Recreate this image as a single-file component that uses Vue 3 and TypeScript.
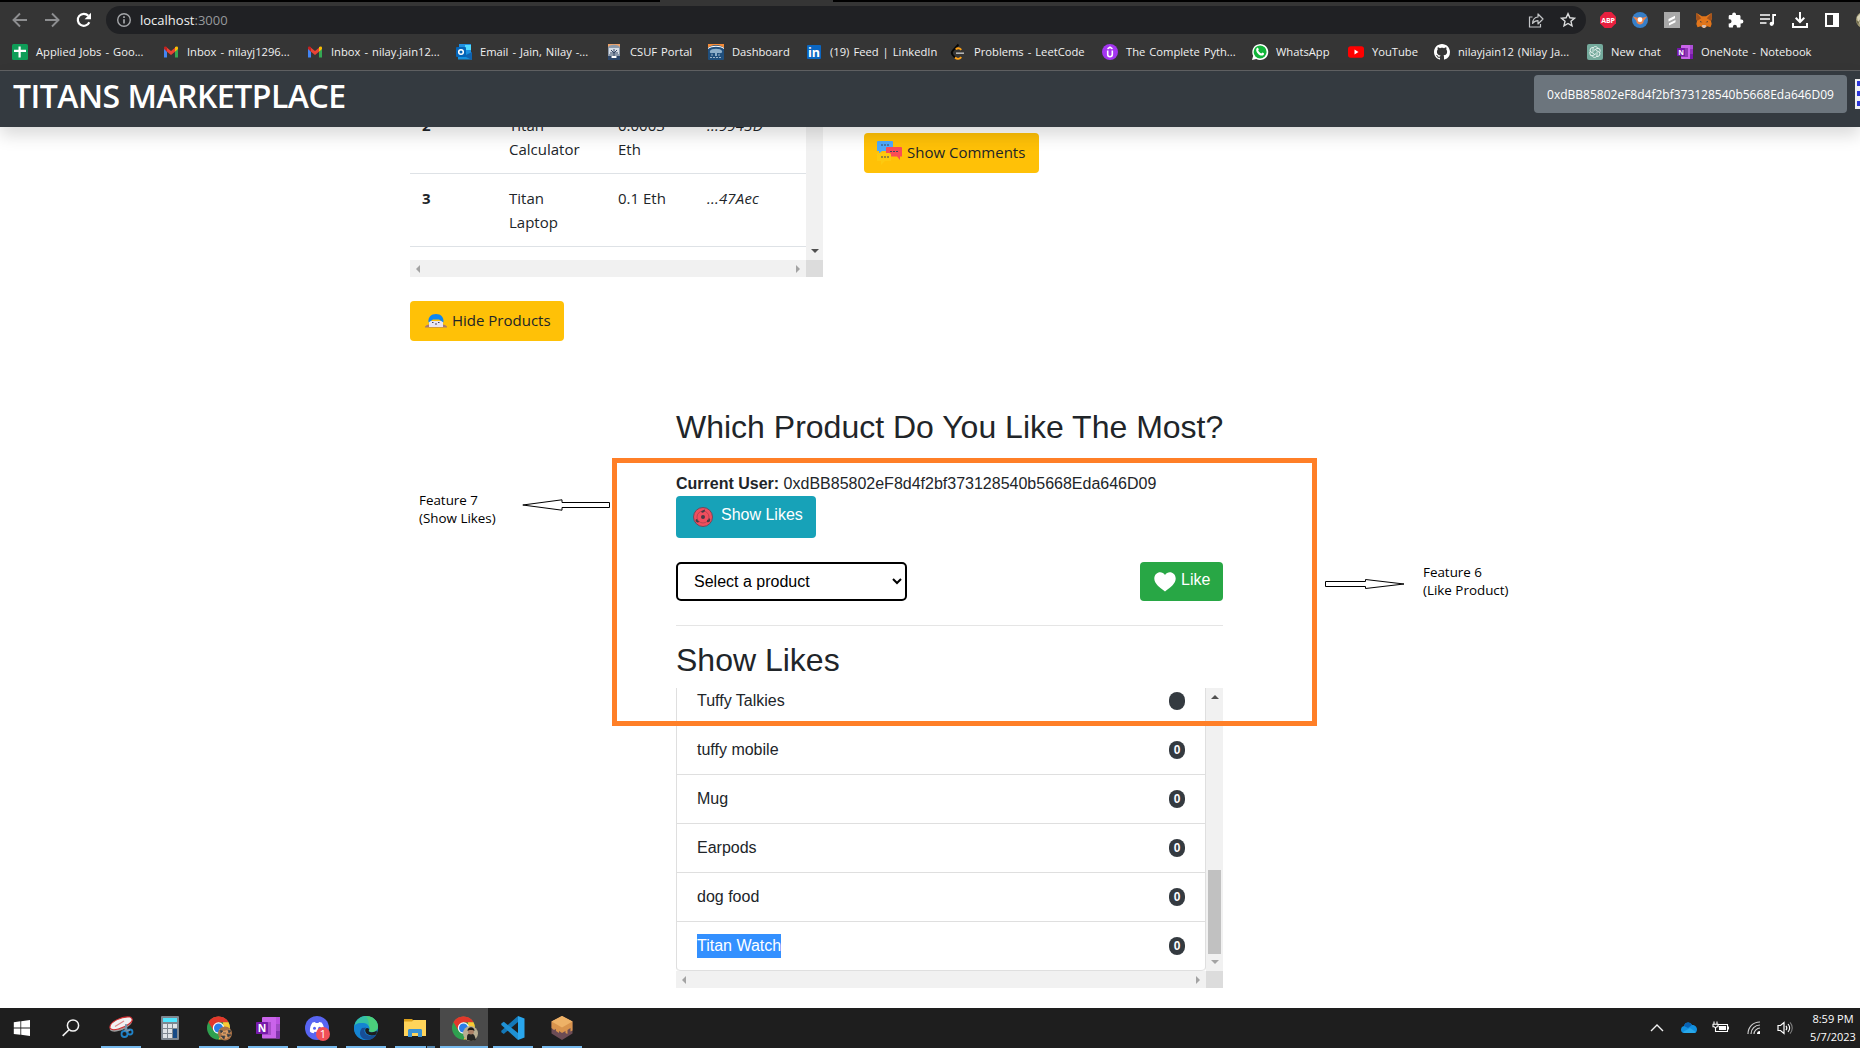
<script setup lang="ts">
interface Bookmark {
  label: string
  icon: string
  width: number
}

interface TaskItem {
  icon: string
  state: 'none' | 'open' | 'active' | 'stacked'
}

const account = '0xdBB85802eF8d4f2bf373128540b5668Eda646D09'

const chromeDisc =
  '<circle cx="11.500" cy="12" r="11.500" fill="#2fa04f"/><path d="M1.500 6.300A11.500 11.500 0 0 1 21.500 6.300H11.500z" fill="#e2382b"/><path d="M1.500 6.300A11.500 11.500 0 0 1 21.500 6.300L11.500 6.300L6.600 14.700z" fill="#e2382b"/><path d="M21.500 6.300A11.500 11.500 0 0 1 11.500 23.500L16.500 14.700L16 6.300z" fill="#fcc934"/><circle cx="11.500" cy="12" r="5.700" fill="#fff"/><circle cx="11.500" cy="12" r="4.500" fill="#2b7de9"/>'

const icons: Record<string, string> = {
  sheets:
    '<rect width="16" height="16" rx="1.500" fill="#0f9d58"/><path d="M6.500 2.500h2.200v3.300H14V8H8.700v5.500H6.500V8H2V5.800h4.500z" fill="#fff"/>',
  gmail:
    '<path d="M1 3.500v10h3V7.500z" fill="#4285f4"/><path d="M15 3.500v10h-3V7.500z" fill="#34a853"/><path d="M4 3.800 8 7l4-3.200v4L8 11 4 7.800z" fill="#ea4335"/><path d="M1 5V3.800C1 2.300 2.700 2 4 3v4.800z" fill="#c5221f"/><path d="M15 5V3.800C15 2.300 13.300 2 12 3v4.800z" fill="#fbbc04"/>',
  outlook:
    '<path d="M3 0h12v10H3z" fill="#1f8fe0"/><path d="M9 1h6v5H9z" fill="#50d9ff"/><path d="M2 8.500 16 9v6.500H2z" fill="#1490df"/><path d="m8 12 8-4v8z" fill="#0f63b0"/><rect y="3" width="10" height="10" rx="1" fill="#0364b8"/><circle cx="5" cy="8" r="2.300" fill="none" stroke="#fff" stroke-width="1.500"/>',
  portal:
    '<rect x="2" width="12" height="16" rx="1" fill="#8c99aa"/><path d="M2 3c3-3 9-3 12 0V0H2z" fill="#eda26a"/><path d="M3 4h10v6H3z" fill="#d6dce5"/><path d="M8 5v8M5 6l3 3 3-3M4 9h8" stroke="#364867" fill="none"/><path d="M2 12h3v4H2zM11 12h3v4h-3zM5 14h6v2H5z" fill="#2b4467"/><path d="M6 12h4v2H6z" fill="#fff"/>',
  dashboard:
    '<rect width="16" height="16" rx="1" fill="#204f7d"/><path d="M0 4c4-4 12-4 16 0V0H0z" fill="#f58b37"/><path d="M0 4c4-3 12-3 16 0v1C12 2 4 2 0 5z" fill="#fff"/><path d="M2 7c1-3 11-3 12 0s-3 2-5 2v3H7V9C4 9 1 10 2 7z" fill="#8eafca"/><path d="M2 13.500h12M3 11h3m4 0h3" stroke="#9db4c8" stroke-dasharray="2 1"/>',
  linkedin:
    '<rect x="1" y="1" width="14" height="14" rx="1" fill="#0a66c2"/><text x="8" y="12.700" text-anchor="middle" font-family="Open Sans" font-size="12.500" font-weight="700" fill="#fff">in</text>',
  leetcode:
    '<path d="M8.500 0.500 2.800 6.700c-1.300 1.400-1.300 3 0 4.500l2.500 2.700" fill="none" stroke="#070707" stroke-width="1.900"/><path d="m5 13.500c2 2 4.500 1.700 6.300-.3M5.800 5.400c1.600-1.700 3.500-1.600 5.500.4" fill="none" stroke="#ffa116" stroke-width="1.900"/><path d="M6 9.200h8" stroke="#b3b3b3" stroke-width="1.600"/>',
  udemy:
    '<circle cx="8" cy="8" r="8" fill="#a435f0"/><path d="M5.700 6.500v4c0 3 4.600 3 4.600 0v-4M5.500 4.800 8 3.200l2.500 1.600" fill="none" stroke="#fff" stroke-width="1.600"/>',
  whatsapp:
    '<path d="M0 16 1.200 11.800A8 8 0 1 1 4.300 15z" fill="#fff"/><circle cx="8.100" cy="7.900" r="6.500" fill="#12b43a"/><path d="M4.700 4.300c1-.9 1.500-.5 2.100 1.200l-.6 1.100c.8 1.500 1.700 2.300 3.200 3l1-1c1.800.7 2 1 1.300 2.100-1.200 1.600-3.700.9-5.500-.7C4.300 8.300 3.500 5.800 4.700 4.300z" fill="#fff"/>',
  youtube:
    '<rect y="2.200" width="16" height="11.600" rx="2.700" fill="#f00"/><path d="m6.500 5.500 4 2.500-4 2.500z" fill="#fff"/>',
  github:
    '<path fill="#fff" d="M8 0C3.580 0 0 3.580 0 8c0 3.540 2.290 6.530 5.470 7.590.4.070.55-.17.55-.38 0-.19-.01-.82-.01-1.490-2.010.37-2.530-.49-2.690-.94-.09-.23-.48-.94-.82-1.130-.28-.15-.68-.52-.01-.53.63-.01 1.080.58 1.230.82.72 1.210 1.870.87 2.330.66.07-.52.28-.87.51-1.070-1.780-.2-3.640-.89-3.640-3.950 0-.87.31-1.590.82-2.150-.08-.2-.36-1.020.08-2.120 0 0 .67-.21 2.200.82.64-.18 1.320-.27 2-.27s1.360.09 2 .27c1.530-1.040 2.200-.82 2.200-.82.44 1.100.16 1.920.08 2.120.51.56.82 1.270.82 2.150 0 3.070-1.870 3.750-3.650 3.950.29.25.54.73.54 1.480 0 1.070-.01 1.930-.01 2.200 0 .21.15.46.55.38A8.010 8.010 0 0 0 16 8c0-4.420-3.580-8-8-8z"/>',
  gpt:
    '<rect width="16" height="16" rx="2" fill="#74aa9c"/><g fill="none" stroke="#e8f3f0" stroke-width=".9"><path d="M6 8V4.800c0-3 4.500-3 5 0"/><path d="M6 8V4.800c0-3 4.500-3 5 0" transform="rotate(60 8 8)"/><path d="M6 8V4.800c0-3 4.500-3 5 0" transform="rotate(120 8 8)"/><path d="M6 8V4.800c0-3 4.500-3 5 0" transform="rotate(180 8 8)"/><path d="M6 8V4.800c0-3 4.500-3 5 0" transform="rotate(240 8 8)"/><path d="M6 8V4.800c0-3 4.500-3 5 0" transform="rotate(300 8 8)"/></g>',
  onenote:
    '<rect x="4" y="1" width="12" height="14" rx=".8" fill="#ca64ea"/><path d="M13 1h3v4h-3z" fill="#ad4fd8"/><path d="M13 5h3v5h-3z" fill="#9332bf"/><path d="M13 10h3v5h-3z" fill="#7719aa"/><path d="M4 4h7v9H4z" fill="#8e3bb1"/><rect y="4" width="8" height="8" rx=".6" fill="#7719aa"/><text x="4" y="10.600" text-anchor="middle" font-family="Open Sans" font-size="7" font-weight="700" fill="#fff">N</text>',

  back: '<path d="M15 8H2M8 1.500 1.500 8 8 14.500" fill="none" stroke="#8d8e90" stroke-width="1.900"/>',
  forward: '<path d="M1 8h13M8 1.500 14.500 8 8 14.500" fill="none" stroke="#8d8e90" stroke-width="1.900"/>',
  reload:
    '<path d="M13.300 10.200A6 6 0 1 1 12.300 3.800" fill="none" stroke="#fff" stroke-width="2.200"/><path d="M15 .8v6.400H8.600z" fill="#fff"/>',
  info:
    '<circle cx="8" cy="8" r="6.300" fill="none" stroke="#a4a6a9" stroke-width="1.400"/><path d="M8 7.200v4.200M8 4.300v1.700" stroke="#a4a6a9" stroke-width="1.700"/>',
  share:
    '<path d="M4.500 5H1.500v10h11v-3" fill="none" stroke="#c4c6c8" stroke-width="1.200"/><path d="M10 2v3C6.500 5.200 4.800 7.500 4.600 11.500 6 9.500 7.500 8.700 10 8.700V12l5-5z" fill="none" stroke="#c4c6c8" stroke-width="1.200" stroke-linejoin="round"/>',
  star:
    '<path d="m8 1.600 1.900 4.200 4.600.5-3.500 3 1 4.500L8 11.500l-4 2.300 1-4.500-3.500-3 4.600-.5z" fill="none" stroke="#dcddde" stroke-width="1.400"/>',
  abp: '<path d="M4.700 0h6.600L16 4.700v6.600L11.300 16H4.700L0 11.300V4.700z" fill="#e8203f"/><text x="8" y="10.600" text-anchor="middle" font-family="Open Sans" font-size="7" font-weight="700" letter-spacing="-.1" fill="#fff">ABP</text>',
  bird:
    '<circle cx="8" cy="8" r="8" fill="#377fc8"/><path d="m.8 4.500 4.500 1.300c1.700-1 3.700-1 5.400 0l4.500-1.300-3.500 4.200c0 5-7.400 5-7.400 0z" fill="#f28448"/><circle cx="8" cy="7.700" r="2.400" fill="#fff"/>',
  grey:
    '<rect width="16" height="16" fill="#a9a9a9"/><path d="m4.500 7 6.500-3.300v2.500L4.500 9.500zM5 11.300 11.500 8v2.200L5 13.500z" fill="#fff"/>',
  fox:
    '<path d="m.5 1 5.500 3.300h4L15.500 1 16 6l-1 3 .7 3-1.200 3.200-3.300-1L8.700 16H7.300l-2.500-1.800-3.300 1L.3 12 1 9 0 6z" fill="#e2761b"/><path d="m.5 1 4.700 5.200L1 9 0 6zM15.500 1l-4.700 5.200L15 9l1-3z" fill="#a4531c"/><path d="m6.300 13 3.400 0 .5 1.500L8.700 16H7.300l-1.500-1.500z" fill="#d5bfb2"/><path d="m4 9 2.500 1.300H4.300zM12 9l-2.500 1.300h2.200z" fill="#233447"/>',
  puzzle:
    '<path d="M13.500 7.600h-1V4.500c0-.8-.6-1.400-1.400-1.400H8V2.300a1.900 1.900 0 0 0-3.800 0v.8H2c-.8 0-1.300.6-1.300 1.400v2.800h.8a2 2 0 0 1 0 4.100H.7v2.800c0 .8.500 1.300 1.300 1.300h2.900v-.8a2 2 0 0 1 4 0v.8h2.300c.8 0 1.400-.5 1.400-1.300v-2.800h.9a1.900 1.900 0 0 0 0-3.800z" fill="#fff"/>',
  playlist:
    '<path d="M0 3h10M0 7h10M0 11h6.500" stroke="#fff" stroke-width="1.600"/><path d="M12.200 2H16v2h-2v8h-1.800z" fill="#fff"/><circle cx="11.700" cy="11.800" r="2.100" fill="#fff"/>',
  download:
    '<path d="M8 0v9M3.700 5.800 8 10l4.300-4.200M1 11v4h14v-4" fill="none" stroke="#fff" stroke-width="2"/>',
  panel: '<path d="M1 1h14v14H1zm2 2v10h6V3z" fill="#fff" fill-rule="evenodd"/>',
  avatar:
    '<circle cx="8" cy="8" r="8" fill="#a39c78"/><path d="m1 5 3-3 1 4-3 4zM3 11l4-4v7z" fill="#d8d3b8"/><path d="m0 8 3 2-1 3zM4 4l3 2-3 4z" fill="#6e6949"/>',

  windows:
    '<path d="m3.800 6.200 6.600-.9v6.300H3.800zM11.200 5.200 20 4v7.600h-8.800zM3.800 12.500h6.600v6.300l-6.600-.9zM11.200 12.500H20V20l-8.800-1.200z" fill="#fff"/>',
  search:
    '<circle cx="14" cy="9.500" r="5.600" fill="none" stroke="#f3f3f3" stroke-width="1.500"/><path d="m10 13.700-6.300 6.200" stroke="#f3f3f3" stroke-width="1.600"/>',
  snip:
    '<path d="M1 14C-1 8 12 1 20 2c4 1 4 4 1 7-5 5-17 9-20 5z" fill="#9b9b9b"/><path d="M1 12C0 6 13 0 21 1c4 2 2 5-1 7-5 4-17 8-19 4z" fill="#f2f2f2" stroke="#d52e31" stroke-width="1.100"/><path d="M6 10.500 15 5" stroke="#e0888a" stroke-width="1.200"/><circle cx="15.500" cy="18" r="3" fill="none" stroke="#2082c7" stroke-width="1.800"/><circle cx="21" cy="16" r="2.500" fill="none" stroke="#2082c7" stroke-width="1.800"/><path d="m16 15 1-7 1 7 3-1" fill="none" stroke="#7793a8" stroke-width="1.500"/>',
  calculator:
    '<rect x="3" width="18" height="24" rx="1" fill="#7e8790"/><path d="M5 2h14v4H5z" fill="#50e6ff"/><path d="M5 8h4v4H5zm5 0h4v4h-4zm5 0h4v4h-4zM5 13h4v4H5zm5 0h4v4h-4zm-5 5h4v4H5zm5 0h4v4h-4z" fill="#dfe3e7"/><path d="M15 13h4v9h-4z" fill="#164a86"/>',
  chromeTiger:
    chromeDisc +
    '<circle cx="18" cy="17.500" r="7" fill="#a97247"/><path d="m12 13 5 2 6-2-2 4 3 3-5 3-6-1 2-3z" fill="#d89a62"/><path d="m13 14 3 1-2 2zm8 0 3 1-2 2zM14 20h4l-1 3zM20 18l4 1-3 2zM16 17h3" fill="#333b43" stroke="#4b4a48" stroke-width=".8"/>',
  chromeUser:
    chromeDisc +
    '<circle cx="18.500" cy="17.500" r="7.500" fill="#b8ad91"/><path d="M15 21c0-5 7-5 8 0l1 3-5 1-4-1z" fill="#252422"/><circle cx="19" cy="15.500" r="3" fill="#aa7f65"/><path d="M15.500 15c0-5 7-5 7 0l-2-1h-3z" fill="#171717"/>',
  onenoteBig:
    '<rect x="6" y="1" width="18" height="21.500" rx="1" fill="#ca64ea"/><path d="M20 1h4v7h-4z" fill="#bb52df"/><path d="M20 8h4v7h-4z" fill="#a04bc4"/><path d="M20 15h4v7.500h-4z" fill="#8235ad"/><path d="M6 6h9v13H6z" fill="#a84dc8"/><rect y="6" width="12" height="12" rx=".7" fill="#7719aa"/><text x="6" y="15.800" text-anchor="middle" font-family="Open Sans" font-size="10.500" font-weight="700" fill="#fff">N</text>',
  discord:
    '<circle cx="12" cy="12" r="12" fill="#5865f2"/><path d="M7.500 6.500 10 6l.7 1h2.700l.7-1 2.500.5c2 2.700 3 6 2.700 9-1.500 1.200-2.700 1.500-3.700 1.700l-1-1.500c-1.500.5-3.500.5-5 0l-1 1.500c-1.300-.2-2.600-.7-3.700-1.700-.2-3.500.8-6.700 2.600-9z" fill="#fff"/><circle cx="9.500" cy="12.300" r="1.500" fill="#5865f2"/><circle cx="14.600" cy="12.300" r="1.500" fill="#5865f2"/>',
  edge:
    '<circle cx="12" cy="12" r="12" fill="#168bd5"/><path d="M.3 10C2 3 7 0 12 0c7 0 12 5 12 10.500 0 3-2.300 5.500-5.700 5.500-3 0-4-1-3-2.400C16 9.500 12.500 6.500 8.500 7 4.500 7 1.500 8 .3 10z" fill="#35c1a5"/><path d="M12 0c7 0 12 5 12 10.500 0 3-2.300 5.500-5.700 5.500-3 0-4-1-3-2.400.5-4.600-1-10.600-3.300-13.600z" fill="#55d66b" opacity=".7"/><path d="M.2 10.500C2 6 13 5 15.500 12l-.3 1.700C14 10 8 10 7 15c-.7 4 2.500 8 6 9C6 24.500-1 19 .2 10.500z" fill="#1584d2"/><path d="M8 12c-5 6 0 13 7.500 11.600 3-.5 6-3 6.700-5.200-4 2.500-11 1.500-11.800-3.400-.2-1.500 1-3 2-3.500z" fill="#174e96"/><path d="M11.200 14c.3-2 2-2.600 4-1l-.2 1c-1 1.500.5 2.500 3 2.200 2 0 3.500-.6 4.500-1.700.7 1.500.3 2.800-.3 3.900-4.500 2.300-11.200.5-11-4.400z" fill="#1e1e1e"/>',
  explorer:
    '<path d="M1 3h8l2 2h12v15H1z" fill="#dca11b"/><path d="M1 5.500h8L10.500 4H23v16H1z" fill="#ffd45a"/><path d="M5 14.500c0-1 .8-1.500 1.500-1.500h11c1 0 1.500.7 1.500 1.500V21h-4v-4H9v4H5z" fill="#3b93d3"/>',
  vscode:
    '<path d="M17 0v6L4.500 16.500 2.800 18 .3 16.300v-1.500z" fill="#1478b8"/><path d="M.3 7.500 2.800 5.700 17 17v7L.3 9z" fill="#1f91d4"/><path d="m17 0 6.500 2.500v19L17 24z" fill="#29a6ed"/>',
  honey:
    '<path d="m12 0 10.500 5.500v12L12 24 1.500 17.500v-12z" fill="#6c4c55"/><path d="m12 0 10.500 5.500v9l-2 1V12l-3 2v4l-2-1v-2L12 17l-3-2v2l-3-2v-2l-2 1-2.500-2V5.500z" fill="#d9944d"/><path d="m12 0 10.500 5.500L12 11.500 1.500 5.500z" fill="#eeb267"/>',

  chevron: '<path d="m2 11 6-6 6 6" fill="none" stroke="#f3f3f3" stroke-width="1.400"/>',
  onedrive:
    '<path d="M3 6C4 1.500 9.500 1.500 11 5c3 0 5 2 5 4.500S14.500 13 13 13H3C-1 13-1 6.500 3 6z" fill="#1290df"/><path d="M3 6C4 1.500 9.500 1.500 11 5L7 8z" fill="#0863b5"/><path d="M2 12 9 8l6 4c-.5.700-1.200 1-2 1H3.500C3 13 2.500 12.500 2 12z" fill="#28a8ea"/>',
  battery:
    '<path d="M5 4.500h9.500v7H5M1 1.500v2.700M4 1.500v2.700M0 4.200h5v2.500H3.800L2.500 8 1.200 6.700H0zM2.500 8v3.500H5" fill="none" stroke="#fff" stroke-width="1.100"/><path d="M6 6h7v4H6zM14.500 6.500H16v3h-1.500z" fill="#fff"/>',
  wifi:
    '<path d="M2 14C2 7 7 2 14 2M5 14c0-5 4-9 9-9M8 14c0-3 3-6 6-6" fill="none" stroke="#d0d0d0" stroke-width="1.200"/><path d="M11 14a3 3 0 0 1 3-3v3z" fill="#fff"/>',
  sound:
    '<path d="M1 5.500h2.500L7 2.500v11l-3.500-3H1z" fill="none" stroke="#fff" stroke-width="1.200"/><path d="M9 5.800c1 1.300 1 3.100 0 4.400M11 4c2 2.400 2 5.600 0 8" fill="none" stroke="#fff" stroke-width="1.100"/><path d="M13 2.400c3 3.300 3 7.900 0 11.200" fill="none" stroke="#7f7f7f" stroke-width="1.100"/>',
}

const bookmarks: Bookmark[] = [
  { label: 'Applied Jobs - Goo...', icon: 'sheets', width: 151 },
  { label: 'Inbox - nilayj1296...', icon: 'gmail', width: 144 },
  { label: 'Inbox - nilay.jain12...', icon: 'gmail', width: 149 },
  { label: 'Email - Jain, Nilay -...', icon: 'outlook', width: 150 },
  { label: 'CSUF Portal', icon: 'portal', width: 102 },
  { label: 'Dashboard', icon: 'dashboard', width: 98 },
  { label: '(19) Feed | LinkedIn', icon: 'linkedin', width: 144 },
  { label: 'Problems - LeetCode', icon: 'leetcode', width: 152 },
  { label: 'The Complete Pyth...', icon: 'udemy', width: 150 },
  { label: 'WhatsApp', icon: 'whatsapp', width: 96 },
  { label: 'YouTube', icon: 'youtube', width: 86 },
  { label: 'nilayjain12 (Nilay Ja...', icon: 'github', width: 153 },
  { label: 'New chat', icon: 'gpt', width: 90 },
  { label: 'OneNote - Notebook', icon: 'onenote', width: 140 },
]

const extensions = ['abp', 'bird', 'grey', 'fox', 'puzzle', 'playlist', 'download', 'panel', 'avatar']

const products = [
  { id: 2, name: 'Titan Calculator', price: '0.0003 Eth', owner: '...9943D' },
  { id: 3, name: 'Titan Laptop', price: '0.1 Eth', owner: '...47Aec' },
]

const likes = [
  { name: 'Tuffy Talkies', count: '' },
  { name: 'tuffy mobile', count: '0' },
  { name: 'Mug', count: '0' },
  { name: 'Earpods', count: '0' },
  { name: 'dog food', count: '0' },
  { name: 'Titan Watch', count: '0', selected: true },
]

const tasks: TaskItem[] = [
  { icon: 'snip', state: 'open' },
  { icon: 'calculator', state: 'none' },
  { icon: 'chromeTiger', state: 'open' },
  { icon: 'onenoteBig', state: 'open' },
  { icon: 'discord', state: 'open' },
  { icon: 'edge', state: 'open' },
  { icon: 'explorer', state: 'stacked' },
  { icon: 'chromeUser', state: 'active' },
  { icon: 'vscode', state: 'open' },
  { icon: 'honey', state: 'open' },
]

const trayIcons = ['chevron', 'onedrive', 'battery', 'wifi', 'sound']
</script>

<template>
  <div class="screen">
    <header class="browser">
      <div class="tabstrip"><span class="tab"></span></div>
      <div class="toolbar">
        <svg v-for="name in ['back', 'forward', 'reload']" :key="name" class="nav-icon" viewBox="0 0 16 16" v-html="icons[name]"></svg>
        <div class="omnibox">
          <svg class="i16" viewBox="0 0 16 16" v-html="icons.info"></svg>
          <span class="url">localhost<span class="port">:3000</span></span>
          <svg class="i16 share" viewBox="0 0 16 16" v-html="icons.share"></svg>
          <svg class="i16" viewBox="0 0 16 16" v-html="icons.star"></svg>
        </div>
        <div class="extensions">
          <svg v-for="name in extensions" :key="name" class="i16" viewBox="0 0 16 16" v-html="icons[name]"></svg>
        </div>
      </div>
      <nav class="bookmarks">
        <a v-for="b in bookmarks" :key="b.label" class="bookmark" :style="{ width: b.width + 'px' }">
          <svg class="i16" viewBox="0 0 16 16" v-html="icons[b.icon]"></svg>
          <span>{{ b.label }}</span>
        </a>
      </nav>
    </header>

    <div class="navbar">
      <span class="brand">TITANS MARKETPLACE</span>
      <button class="account">{{ account }}</button>
      <svg class="identicon" viewBox="0 0 30 30">
        <rect width="30" height="30" fill="#f0f0f0" />
        <path d="M2 2h6v5H2zM2 12h6v5H2zM2 22h6v5H2zM12 7h6v5h-6zM12 17h6v5h-6z" fill="#2c36d8" />
      </svg>
    </div>

    <main class="page">
      <section class="top-row">
        <div class="left-col">
          <div class="scroller products">
            <div class="viewport">
              <table>
                <tbody>
                  <tr v-for="p in products" :key="p.id">
                    <th>{{ p.id }}</th>
                    <td class="name">{{ p.name }}</td>
                    <td class="price">{{ p.price }}</td>
                    <td class="owner"><i>{{ p.owner }}</i></td>
                  </tr>
                </tbody>
              </table>
              <div class="next-row"></div>
            </div>
            <div class="vbar"><span class="arrow down dark"></span></div>
            <div class="hbar"><span class="arrow left"></span><span class="arrow right"></span></div>
            <div class="corner"></div>
          </div>
          <button class="btn warning hide">
            <svg width="22" height="14" viewBox="0 0 22 14">
              <path d="M0 12.500q2-2 4-2v-3h14v3q2 0 4 2v1H0z" fill="#a77a70" />
              <path d="M4 7h14v6H4z" fill="#e9e4f0" />
              <path d="M3.500 8.500C3 3 6 0 11 0s8 3 7.500 8.500L14 5.500H8z" fill="#0c87f2" />
              <path d="M7 8.500h1.500M13 8.500h1.500M10 10h2" stroke="#4a4258" />
            </svg>
            <span>Hide Products</span>
          </button>
        </div>
        <button class="btn warning comments">
          <svg width="26" height="24" viewBox="0 0 26 24">
            <path d="M1 0h14q1 0 1 1v9H5l-3 2.500V10H0V1q0-1 1-1z" fill="#4da9fb" />
            <path d="M10 6h14q1 0 1 1v8.500h-2V19l-3-3.500H9V7q0-1 1-1z" fill="#fb4b55" />
            <path d="M1 12h11q2 0 2 1.500V20H8l-4 4v-4H0v-7q0-1 1-1z" fill="#fdc90f" />
            <path d="M4 4h8M13 10.500h8M4 16h8" stroke="#3c4660" stroke-width="1.200" stroke-dasharray="2 1" />
          </svg>
          <span>Show Comments</span>
        </button>
      </section>

      <section class="likes">
        <h2>Which Product Do You Like The Most?</h2>
        <div class="user"><b>Current User:</b> {{ account }}</div>
        <button class="btn info">
          <svg width="20" height="20" viewBox="0 0 20 20">
            <circle cx="10" cy="10" r="9.500" fill="#f04e5e" stroke="#6e4a5c" />
            <circle cx="10" cy="10" r="6" fill="none" stroke="#a8434f" stroke-width=".8" />
            <circle cx="10" cy="10" r="2" fill="#4a3944" />
            <path d="M8 4.500a2 2 0 1 0 3-2.500q1 1-.5 1zM3 12a2 2 0 1 0 3.500 2.500q-2 0-2-2zM14 15a2 2 0 1 0 2-4q0 2-2 2z" fill="#4a3944" />
          </svg>
          <span>Show Likes</span>
        </button>
        <div class="picker">
          <select>
            <option>Select a product</option>
          </select>
          <button class="btn success">
            <svg width="22" height="20" viewBox="0 0 22 20">
              <path d="M11 19.500C5 15 .3 11.500.3 6.500.3 0 8-2 11 3c3-5 10.700-3 10.700 3.500 0 5-4.700 8.500-10.700 13z" fill="#fff" />
            </svg>
            <span>Like</span>
          </button>
        </div>
        <hr />
        <h2 class="sub">Show Likes</h2>
        <div class="scroller list">
          <div class="viewport">
            <ul>
              <li v-for="l in likes" :key="l.name">
                <span :class="{ selected: l.selected }">{{ l.name }}</span>
                <span class="badge">{{ l.count }}</span>
              </li>
            </ul>
          </div>
          <div class="vbar">
            <span class="arrow up dark"></span>
            <span class="thumb"></span>
            <span class="arrow down"></span>
          </div>
          <div class="hbar"><span class="arrow left"></span><span class="arrow right"></span></div>
          <div class="corner"></div>
        </div>
      </section>

      <div class="highlight"></div>
      <div class="note note-left">
        <p>Feature 7<br />(Show Likes)</p>
        <svg width="88" height="12" viewBox="0 0 88 12">
          <path d="M.8 6 40 .8v2.700h47.500v5H40v2.700z" fill="#fff" stroke="#000" />
        </svg>
      </div>
      <div class="note note-right">
        <svg width="80" height="12" viewBox="0 0 80 12">
          <path d="M79 6 40.500 1.500v2h-40v5h40v2z" fill="#fff" stroke="#000" />
        </svg>
        <p>Feature 6<br />(Like Product)</p>
      </div>
    </main>

    <footer class="taskbar">
      <div class="launch"><svg class="i24" viewBox="0 0 24 24" v-html="icons.windows"></svg></div>
      <div class="launch find"><svg class="i24" viewBox="0 0 24 24" v-html="icons.search"></svg></div>
      <div v-for="t in tasks" :key="t.icon" class="task" :class="t.state">
        <svg class="i24" viewBox="0 0 24 24" v-html="icons[t.icon]"></svg>
        <span v-if="t.icon === 'discord'" class="count">1</span>
      </div>
      <div class="tray">
        <svg v-for="name in trayIcons" :key="name" class="i16" :class="name" viewBox="0 0 16 16" v-html="icons[name]"></svg>
        <div class="clock">8:59 PM<br />5/7/2023</div>
      </div>
    </footer>
  </div>
</template>

<style>
body {
  overflow: hidden;
}
</style>

<style scoped>
.screen {
  width: 1860px;
  height: 1048px;
  display: flex;
  flex-direction: column;
  overflow: hidden;
  background: #fff;
  color: #212529;
  font-family: "Open Sans", "Noto Sans", sans-serif;
}
* {
  box-sizing: border-box;
}
svg {
  display: block;
  flex: none;
  overflow: visible;
}
button {
  font: inherit;
  border: 0;
}
.i16 {
  width: 16px;
  height: 16px;
}
.i24 {
  width: 24px;
  height: 24px;
}
.browser {
  flex: none;
  height: 71px;
  background: #353535;
  border-bottom: 1px solid #606163;
  color: #f1f1f1;
}
.tabstrip {
  height: 2px;
  background: #000;
  padding-left: 660px;
}
.tab {
  display: block;
  width: 173px;
  height: 2px;
  background: #353535;
}
.toolbar {
  height: 32px;
  padding: 4px 0 0 12px;
  display: flex;
  align-items: center;
}
.nav-icon {
  width: 16px;
  height: 16px;
  margin-right: 16px;
}
.omnibox {
  flex: none;
  width: 1480px;
  height: 28px;
  margin-left: -2px;
  padding: 0 10px;
  border-radius: 14px;
  background: #202124;
  display: flex;
  align-items: center;
}
.url {
  flex: 1;
  margin-left: 8px;
  font-size: 13px;
  line-height: 28px;
}
.port {
  color: #97999c;
}
.share {
  margin-right: 16px;
}
.extensions {
  flex: none;
  display: flex;
  gap: 16px;
  margin-left: 14px;
}
.bookmarks {
  height: 36px;
  padding-left: 12px;
  display: flex;
  align-items: center;
}
.bookmark {
  flex: none;
  display: flex;
  align-items: center;
  gap: 8px;
  font-size: 11.2px;
  word-spacing: 1.1px;
  white-space: nowrap;
}
.bookmark span {
  margin-top: -1px;
}
.navbar {
  flex: none;
  position: relative;
  z-index: 2;
  height: 56px;
  padding-left: 13px;
  display: flex;
  align-items: center;
  background: #343a40;
  box-shadow: 0 8px 16px rgba(0, 0, 0, 0.15);
}
.brand {
  flex: 1;
  margin-top: -6px;
  color: #fff;
  font-size: 32px;
  font-weight: 600;
  letter-spacing: -0.52px;
  line-height: 40px;
}
.account {
  flex: none;
  width: 313px;
  height: 38px;
  margin: -10px 8px 0 0;
  padding: 1px 0 0;
  border-radius: 4px;
  background: #6c757d;
  color: #fff;
  font-size: 12px;
}
.identicon {
  width: 30px;
  height: 30px;
  margin: -10px -25px 0 0;
}
.page {
  position: relative;
  flex: none;
  height: 881px;
  font-size: 15px;
}
.top-row {
  display: flex;
  align-items: flex-start;
  padding-left: 410px;
}
.scroller {
  display: grid;
  grid-template-columns: 1fr 17px;
  grid-template-rows: minmax(0, 1fr) 17px;
}
.viewport {
  overflow: hidden;
  display: flex;
  flex-direction: column;
  justify-content: flex-end;
}
.vbar,
.hbar {
  background: #f1f1f1;
  display: flex;
  align-items: center;
  justify-content: space-between;
}
.hbar {
  padding: 0 6px;
}
.vbar {
  flex-direction: column;
  padding: 7px 0;
}
.products .vbar {
  justify-content: flex-end;
}
.corner {
  background: #dcdcdc;
}
.arrow {
  width: 0;
  height: 0;
  border: 4px solid transparent;
}
.arrow.left {
  border-left: 0;
  border-right-color: #a3a3a3;
}
.arrow.right {
  border-right: 0;
  border-left-color: #a3a3a3;
}
.arrow.up {
  border-top: 0;
  border-bottom-color: #a3a3a3;
}
.arrow.down {
  border-bottom: 0;
  border-top-color: #a3a3a3;
}
.arrow.up.dark {
  border-bottom-color: #505050;
}
.arrow.down.dark {
  border-top-color: #505050;
}
.left-col {
  width: 413px;
}
.products {
  height: 150px;
}
table {
  flex: none;
  width: 396px;
  table-layout: fixed;
  border-collapse: collapse;
  line-height: 24px;
}
th,
td {
  height: 73px;
  padding: 12px 12px 12px 0;
  border-top: 1px solid #dee2e6;
  text-align: left;
  vertical-align: top;
}
th {
  width: 99px;
  padding-left: 12px;
}
.name {
  width: 109px;
  padding-right: 30px;
}
.price {
  width: 89px;
  padding-right: 30px;
}
.owner {
  letter-spacing: 0.2px;
}
.next-row {
  flex: none;
  height: 14px;
  border-top: 1px solid #dee2e6;
}
.btn {
  display: flex;
  align-items: center;
  padding: 0;
  border-radius: 4px;
  white-space: nowrap;
}
.warning {
  height: 40px;
  background: #ffc107;
  color: #212529;
}
.warning span {
  margin-top: -2px;
}
.hide {
  width: 154px;
  margin-top: 24px;
  padding-left: 15px;
  gap: 5px;
}
.comments {
  width: 175px;
  margin: 6px 0 0 41px;
  padding-left: 13px;
  gap: 4px;
}
.likes {
  width: 547px;
  margin: 67px 0 0 676px;
  font: 16px/24px "Liberation Sans", Arial, sans-serif;
}
h2 {
  margin: 0 0 25px;
  font-size: 32px;
  font-weight: 400;
  line-height: 39px;
  white-space: nowrap;
}
.user {
  height: 24px;
}
.info {
  width: 140px;
  height: 42px;
  padding-left: 17px;
  gap: 8px;
  background: #17a2b8;
  color: #fff;
}
.info span {
  margin-top: -4px;
}
.picker {
  display: flex;
  justify-content: space-between;
  margin-top: 24px;
}
select {
  width: 231px;
  height: 39px;
  padding: 0 12px;
  border: 2px solid #000;
  border-radius: 5px;
  background: #fff;
  color: #000;
  font: inherit;
}
.success {
  width: 83px;
  height: 39px;
  padding-left: 14px;
  gap: 5px;
  background: #28a745;
  color: #fff;
}
.success span {
  margin-top: -3px;
}
hr {
  height: 1px;
  margin: 24px 0 15px;
  border: 0;
  background: #e5e5e5;
}
h2.sub {
  margin-bottom: 8px;
}
.list {
  height: 300px;
}
ul {
  flex: none;
  margin: 0;
  padding: 0;
  list-style: none;
  border: 1px solid #dfdfdf;
  border-width: 0 1px;
  border-radius: 0 0 4px 4px;
}
li {
  height: 49px;
  padding: 0 20px 0 20px;
  display: flex;
  align-items: center;
  justify-content: space-between;
  border-bottom: 1px solid #dfdfdf;
}
li:last-child {
  border-radius: 0 0 4px 4px;
}
.selected {
  background: #3390ff;
  color: #fff;
}
.badge {
  width: 16px;
  height: 18px;
  border-radius: 8px;
  background: #343a40;
  color: #fff;
  font-size: 12px;
  font-weight: 700;
  line-height: 18px;
  text-align: center;
}
.thumb {
  width: 13px;
  height: 84px;
  margin: auto 0 6px;
  background: #c1c1c1;
}
.highlight {
  position: absolute;
  left: 612px;
  top: 331px;
  width: 705px;
  height: 268px;
  border: 5px solid #ff7f27;
}
.note {
  position: absolute;
  display: flex;
  color: #000;
  font-size: 13.4px;
  line-height: 18px;
}
.note p {
  margin: 0;
  white-space: nowrap;
}
.note-left {
  left: 419px;
  top: 364px;
  width: 191px;
  justify-content: space-between;
}
.note-left svg {
  margin-top: 8px;
}
.note-right {
  left: 1325px;
  top: 436px;
  gap: 18px;
}
.note-right svg {
  margin-top: 15px;
}
.taskbar {
  flex: none;
  height: 40px;
  display: flex;
  background: #1e1e1e;
}
.launch,
.task {
  flex: none;
  width: 48px;
  height: 40px;
  padding-top: 8px;
  display: flex;
  justify-content: center;
}
.launch {
  padding-right: 4px;
}
.find {
  width: 49px;
}
.task {
  position: relative;
  margin-right: 1px;
}
.open,
.stacked {
  background: linear-gradient(#76b9ed, #76b9ed) 4px 38px / 40px 2px no-repeat;
}
.stacked {
  background: linear-gradient(90deg, #76b9ed 31px, #1e1e1e 31px 32px, #5587b0 32px) 4px 38px / 40px 2px no-repeat;
}
.active {
  background: linear-gradient(#76b9ed, #76b9ed) 0 38px / 48px 2px no-repeat #4a4a4a;
}
.count {
  position: absolute;
  left: 23px;
  top: 19px;
  width: 14px;
  height: 14px;
  border-radius: 50%;
  background: #f04f57;
  color: #fff;
  font-size: 11px;
  line-height: 14px;
  text-align: center;
}
.tray {
  flex: 1;
  display: flex;
  align-items: center;
  justify-content: flex-end;
  color: #fff;
}
.chevron,
.onedrive {
  margin-right: 16px;
}
.battery {
  margin-right: 17px;
}
.wifi {
  margin-right: 15px;
}
.sound {
  margin-right: 13px;
}
.clock {
  width: 54px;
  font-size: 11px;
  line-height: 18px;
  text-align: center;
}
</style>
